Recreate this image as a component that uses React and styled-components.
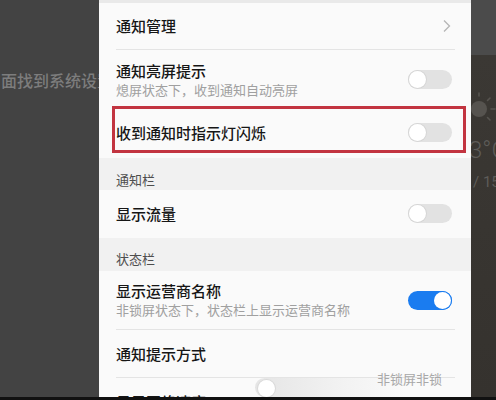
import React from 'react';
import styled, { createGlobalStyle } from 'styled-components';

const GlobalStyle = createGlobalStyle`
  html, body {
    margin: 0;
    padding: 0;
    background: #434343;
  }
  body {
    font-family: "Noto Sans CJK SC", "Noto Sans", sans-serif;
  }
`;

const Page = styled.div`
  width: 496px;
  height: 400px;
  display: flex;
  flex-direction: column;
  overflow: hidden;
`;

const Main = styled.div`
  flex: 1;
  display: flex;
  min-height: 0;
`;

const BottomBar = styled.div`
  height: 3px;
  background: #111;
`;

const LeftPane = styled.div`
  width: 99px;
  flex-shrink: 0;
  background: #434343;
  overflow: hidden;
`;

const Caption = styled.div`
  margin: 70px 0 0 1px;
  white-space: nowrap;
  font-size: 16px;
  line-height: 20px;
  color: #7d7d7d;
  font-weight: 500;
`;

const Panel = styled.div`
  width: 372px;
  flex-shrink: 0;
  background: #fafafa;
  position: relative;
  overflow: hidden;
  display: flex;
  flex-direction: column;
`;

const TopEdge = styled.div`
  height: 5px;
  border-top: 3px solid #e9e9e9;
  box-sizing: border-box;
`;

const Row = styled.div`
  height: ${({ h }) => h}px;
  flex-shrink: 0;
  padding: 0 16px 0 17px;
  position: relative;
  display: flex;
`;

const RowInner = styled.div`
  flex: 1;
  display: flex;
  align-items: center;
  padding: ${({ pt }) => (pt ? `${pt}px 3px 0 0` : '0 3px 0 0')};
  border-bottom: ${({ divider }) => (divider ? '1px solid #e4e4e4' : '1px solid transparent')};
`;

const TextBlock = styled.div`
  flex: 1;
  display: flex;
  flex-direction: column;
`;

const Title = styled.div`
  font-size: 15px;
  line-height: 20px;
  font-weight: 500;
  color: #161616;
`;

const Subtitle = styled.div`
  font-size: 13px;
  line-height: 18px;
  color: #a0a0a0;
`;

const SectionHeader = styled.div`
  height: ${({ h }) => h}px;
  flex-shrink: 0;
  box-sizing: border-box;
  padding: ${({ pt }) => pt}px 0 0 17px;
  background: #f1f1f1;
  font-size: 13px;
  line-height: 18px;
  color: #4e4e4e;
`;

const Track = styled.div`
  width: 44px;
  height: 19px;
  border-radius: 10px;
  background: ${({ on }) => (on ? '#1a7cf0' : '#e2e2e2')};
  position: relative;
  flex-shrink: 0;
`;

const Knob = styled.div`
  position: absolute;
  top: 1px;
  left: ${({ on }) => (on ? '26px' : '1px')};
  width: 17px;
  height: 17px;
  border-radius: 50%;
  background: #fff;
  box-shadow: 0 0 0 1px ${({ on }) => (on ? '#1a7cf0' : '#d6d6d6')};
`;

const Highlight = styled.div`
  position: absolute;
  left: 13px;
  right: 5px;
  top: 0;
  height: 47px;
  border: 3px solid #c23440;
  box-sizing: border-box;
  pointer-events: none;
`;

const Ghost = styled.div`
  position: absolute;
  left: 150px;
  top: 368px;
  width: 222px;
  height: 29px;
  pointer-events: none;
`;

const GhostSmear = styled.div`
  position: absolute;
  left: 6px;
  top: 10px;
  width: 150px;
  height: 19px;
  border-radius: 10px 0 0 10px;
  background: linear-gradient(90deg, rgba(220, 220, 220, 0.7), rgba(235, 235, 235, 0.5) 60%, rgba(250, 250, 250, 0));
`;

const GhostKnob = styled.div`
  position: absolute;
  left: 9px;
  top: 12px;
  width: 17px;
  height: 17px;
  border-radius: 50%;
  background: #fff;
  box-shadow: 0 0 0 1px #dadada;
`;

const GhostText = styled.div`
  position: absolute;
  left: 128px;
  top: 2px;
  font-size: 13px;
  line-height: 18px;
  color: #a8a8a8;
  white-space: nowrap;
`;

const RightPane = styled.div`
  width: 25px;
  flex-shrink: 0;
  display: flex;
  flex-direction: column;
  overflow: hidden;
`;

const RightTop = styled.div`
  height: 55px;
  background: #4b4b4b;
`;

const Weather = styled.div`
  flex: 1;
  background: linear-gradient(180deg, #3b3834, #35322e);
  display: flex;
  flex-direction: column;
  padding-top: 36px;
  color: #5e5c59;
`;

const Temp = styled.div`
  margin: 10px 0 0 -2px;
  font-family: Roboto, "Noto Sans", sans-serif;
  font-weight: 300;
  font-size: 24px;
  line-height: 26px;
  white-space: nowrap;
`;

const Range = styled.div`
  margin: 10px 0 0 2px;
  font-family: Roboto, "Noto Sans", sans-serif;
  font-size: 15px;
  line-height: 18px;
  white-space: nowrap;
`;

const Toggle = ({ on }) => (
  <Track on={on ? 1 : 0}>
    <Knob on={on ? 1 : 0} />
  </Track>
);

const Chevron = () => (
  <svg width="10" height="14" viewBox="0 0 10 14">
    <path d="M2 1.5 L7.5 7 L2 12.5" fill="none" stroke="#b5b5b5" strokeWidth="1.3" />
  </svg>
);

const Sun = () => (
  <svg width="25" height="36" viewBox="0 0 25 36">
    <circle cx="8" cy="18" r="8" fill="#56534f" />
    <g stroke="#56534f" strokeWidth="1.6" strokeLinecap="round">
      <line x1="20" y1="18" x2="24" y2="18" />
      <line x1="16.5" y1="9.5" x2="19" y2="7" />
      <line x1="16.5" y1="26.5" x2="19" y2="29" />
      <line x1="8" y1="2" x2="8" y2="5" />
    </g>
  </svg>
);

const App = () => (
  <>
    <GlobalStyle />
    <Page>
      <Main>
        <LeftPane>
          <Caption>面找到系统设置</Caption>
        </LeftPane>
        <Panel>
          <TopEdge />
          <Row h={47}>
            <RowInner divider>
              <TextBlock>
                <Title>通知管理</Title>
              </TextBlock>
              <Chevron />
            </RowInner>
          </Row>
          <Row h={56}>
            <RowInner pt={4}>
              <TextBlock>
                <Title>通知亮屏提示</Title>
                <Subtitle>熄屏状态下，收到通知自动亮屏</Subtitle>
              </TextBlock>
              <Toggle />
            </RowInner>
          </Row>
          <Row h={52}>
            <RowInner pt={2}>
              <TextBlock>
                <Title>收到通知时指示灯闪烁</Title>
              </TextBlock>
              <Toggle />
            </RowInner>
            <Highlight />
          </Row>
          <SectionHeader h={32} pt={13}>通知栏</SectionHeader>
          <Row h={48}>
            <RowInner>
              <TextBlock>
                <Title>显示流量</Title>
              </TextBlock>
              <Toggle />
            </RowInner>
          </Row>
          <SectionHeader h={33} pt={12}>状态栏</SectionHeader>
          <Row h={59}>
            <RowInner divider>
              <TextBlock>
                <Title>显示运营商名称</Title>
                <Subtitle>非锁屏状态下，状态栏上显示运营商名称</Subtitle>
              </TextBlock>
              <Toggle on />
            </RowInner>
          </Row>
          <Row h={48}>
            <RowInner divider>
              <TextBlock>
                <Title>通知提示方式</Title>
              </TextBlock>
            </RowInner>
          </Row>
          <Row h={44}>
            <RowInner pt={4}>
              <TextBlock>
                <Title>显示网络速度</Title>
              </TextBlock>
            </RowInner>
          </Row>
          <Ghost>
            <GhostSmear />
            <GhostKnob />
            <GhostText>非锁屏非锁</GhostText>
          </Ghost>
        </Panel>
        <RightPane>
          <RightTop />
          <Weather>
            <Sun />
            <Temp>3°C</Temp>
            <Range>/ 15</Range>
          </Weather>
        </RightPane>
      </Main>
      <BottomBar />
    </Page>
  </>
);

export default App;
